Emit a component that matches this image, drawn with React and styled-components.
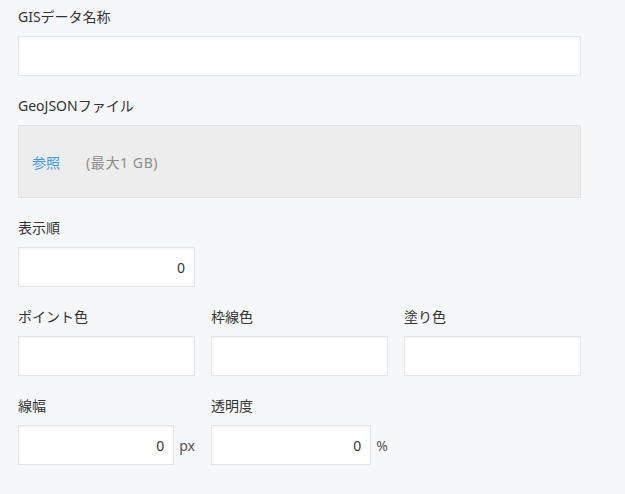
import React from 'react';
import styled, { createGlobalStyle } from 'styled-components';

const GlobalStyle = createGlobalStyle`
  html, body {
    margin: 0;
    padding: 0;
    background: #f6f7f9;
  }
  body {
    font-family: "Noto Sans", "Noto Sans CJK JP", sans-serif;
    font-size: 14px;
    color: #333;
  }
`;

const Form = styled.div`
  display: flex;
  flex-direction: column;
  gap: 21px;
  width: 563px;
  padding: 8px 0 20px 18px;
`;

const Row = styled.div`
  display: grid;
  grid-template-columns: repeat(3, 177px);
  column-gap: 16px;
`;

const Field = styled.div`
  display: flex;
  flex-direction: column;
  gap: 10px;
  width: ${props => props.width || '100%'};
`;

const Label = styled.label`
  font-size: 14px;
  line-height: 18px;
  color: #333;
`;

const Input = styled.input`
  box-sizing: border-box;
  flex-shrink: 0;
  width: 100%;
  height: 40px;
  padding: 0 9px;
  border: 1px solid #e3e4e6;
  background: #fff;
  box-shadow: inset 0 1px 3px rgba(0, 0, 0, 0.06);
  font-family: inherit;
  font-size: 14px;
  color: #333;
  text-align: ${props => props.align || 'left'};
  outline: none;
`;

const UnitInput = styled(Input)`
  flex: 1 1 auto;
  min-width: 0;
  width: auto;
`;

const FileBox = styled.div`
  box-sizing: border-box;
  height: 73px;
  display: flex;
  align-items: center;
  gap: 26px;
  padding: 0 13px;
  background: #ededed;
  border: 1px solid #e2e2e2;
`;

const BrowseLink = styled.a`
  color: #3a9be0;
  font-size: 14px;
  cursor: pointer;
`;

const Hint = styled.span`
  color: #8c8c8c;
  font-size: 14px;
  letter-spacing: 0.6px;
`;

const UnitWrap = styled.div`
  display: flex;
  align-items: center;
  gap: 5px;
`;

const Unit = styled.span`
  flex-shrink: 0;
  font-size: 14px;
  color: #555;
`;

export default function App() {
  return (
    <>
      <GlobalStyle />
      <Form>
        <Field>
          <Label>GISデータ名称</Label>
          <Input type="text" />
        </Field>
        <Field>
          <Label>GeoJSONファイル</Label>
          <FileBox>
            <BrowseLink>参照</BrowseLink>
            <Hint>(最大1 GB)</Hint>
          </FileBox>
        </Field>
        <Field width="177px">
          <Label>表示順</Label>
          <Input type="text" align="right" defaultValue="0" />
        </Field>
        <Row>
          <Field>
            <Label>ポイント色</Label>
            <Input type="text" />
          </Field>
          <Field>
            <Label>枠線色</Label>
            <Input type="text" />
          </Field>
          <Field>
            <Label>塗り色</Label>
            <Input type="text" />
          </Field>
        </Row>
        <Row>
          <Field>
            <Label>線幅</Label>
            <UnitWrap>
              <UnitInput type="text" align="right" defaultValue="0" />
              <Unit>px</Unit>
            </UnitWrap>
          </Field>
          <Field>
            <Label>透明度</Label>
            <UnitWrap>
              <UnitInput type="text" align="right" defaultValue="0" />
              <Unit>%</Unit>
            </UnitWrap>
          </Field>
        </Row>
      </Form>
    </>
  );
}
